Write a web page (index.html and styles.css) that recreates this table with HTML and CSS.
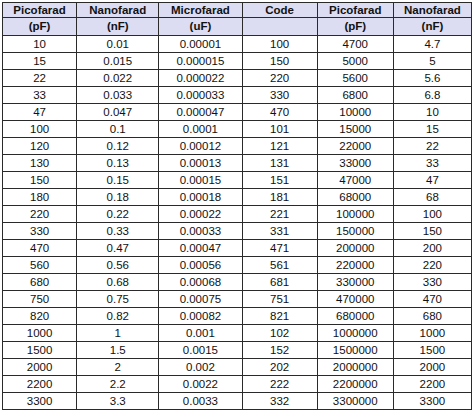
FILE: index.html
```html
<!DOCTYPE html>
<html>
<head>
<meta charset="utf-8">
<link rel="stylesheet" href="styles.css">
</head>
<body>
<table class="caps">
  <colgroup>
    <col class="c1"><col class="c2"><col class="c3"><col class="c4"><col class="c5"><col class="c6">
  </colgroup>
  <thead>
    <tr class="h1"><th>Picofarad</th><th>Nanofarad</th><th>Microfarad</th><th>Code</th><th>Picofarad</th><th>Nanofarad</th></tr>
    <tr class="h2"><th>(pF)</th><th>(nF)</th><th>(uF)</th><th></th><th>(pF)</th><th>(nF)</th></tr>
  </thead>
  <tbody>
    <tr><td>10</td><td>0.01</td><td>0.00001</td><td>100</td><td>4700</td><td>4.7</td></tr>
    <tr><td>15</td><td>0.015</td><td>0.000015</td><td>150</td><td>5000</td><td>5</td></tr>
    <tr><td>22</td><td>0.022</td><td>0.000022</td><td>220</td><td>5600</td><td>5.6</td></tr>
    <tr><td>33</td><td>0.033</td><td>0.000033</td><td>330</td><td>6800</td><td>6.8</td></tr>
    <tr><td>47</td><td>0.047</td><td>0.000047</td><td>470</td><td>10000</td><td>10</td></tr>
    <tr><td>100</td><td>0.1</td><td>0.0001</td><td>101</td><td>15000</td><td>15</td></tr>
    <tr><td>120</td><td>0.12</td><td>0.00012</td><td>121</td><td>22000</td><td>22</td></tr>
    <tr><td>130</td><td>0.13</td><td>0.00013</td><td>131</td><td>33000</td><td>33</td></tr>
    <tr><td>150</td><td>0.15</td><td>0.00015</td><td>151</td><td>47000</td><td>47</td></tr>
    <tr><td>180</td><td>0.18</td><td>0.00018</td><td>181</td><td>68000</td><td>68</td></tr>
    <tr><td>220</td><td>0.22</td><td>0.00022</td><td>221</td><td>100000</td><td>100</td></tr>
    <tr><td>330</td><td>0.33</td><td>0.00033</td><td>331</td><td>150000</td><td>150</td></tr>
    <tr><td>470</td><td>0.47</td><td>0.00047</td><td>471</td><td>200000</td><td>200</td></tr>
    <tr><td>560</td><td>0.56</td><td>0.00056</td><td>561</td><td>220000</td><td>220</td></tr>
    <tr><td>680</td><td>0.68</td><td>0.00068</td><td>681</td><td>330000</td><td>330</td></tr>
    <tr><td>750</td><td>0.75</td><td>0.00075</td><td>751</td><td>470000</td><td>470</td></tr>
    <tr><td>820</td><td>0.82</td><td>0.00082</td><td>821</td><td>680000</td><td>680</td></tr>
    <tr><td>1000</td><td>1</td><td>0.001</td><td>102</td><td>1000000</td><td>1000</td></tr>
    <tr><td>1500</td><td>1.5</td><td>0.0015</td><td>152</td><td>1500000</td><td>1500</td></tr>
    <tr><td>2000</td><td>2</td><td>0.002</td><td>202</td><td>2000000</td><td>2000</td></tr>
    <tr><td>2200</td><td>2.2</td><td>0.0022</td><td>222</td><td>2200000</td><td>2200</td></tr>
    <tr><td>3300</td><td>3.3</td><td>0.0033</td><td>332</td><td>3300000</td><td>3300</td></tr>
  </tbody>
</table>
</body>
</html>
```
FILE: styles.css
```css
html, body {
  margin: 0;
  padding: 0;
  background: #ffffff;
}
body {
  padding: 2px 0 0 2px;
}
.caps {
  border-collapse: collapse;
  table-layout: fixed;
  width: 470px;
  font-family: "Liberation Sans", Arial, sans-serif;
  font-size: 11.5px;
  color: #111;
}
.c1 { width: 74px; }
.c2 { width: 82px; }
.c3 { width: 83px; }
.c4 { width: 75px; }
.c5 { width: 76px; }
.c6 { width: 78px; }
.caps th, .caps td {
  border: 1px solid #2a2a2a;
  padding: 0;
  text-align: center;
  vertical-align: middle;
  line-height: 11px;
}
.caps th {
  background: #dcdcf2;
  font-weight: bold;
  color: #111;
}
.caps .h1 {
  height: 15px;
}
.caps .h2 {
  height: 18px;
}
.caps tbody tr {
  height: 17px;
}
```
